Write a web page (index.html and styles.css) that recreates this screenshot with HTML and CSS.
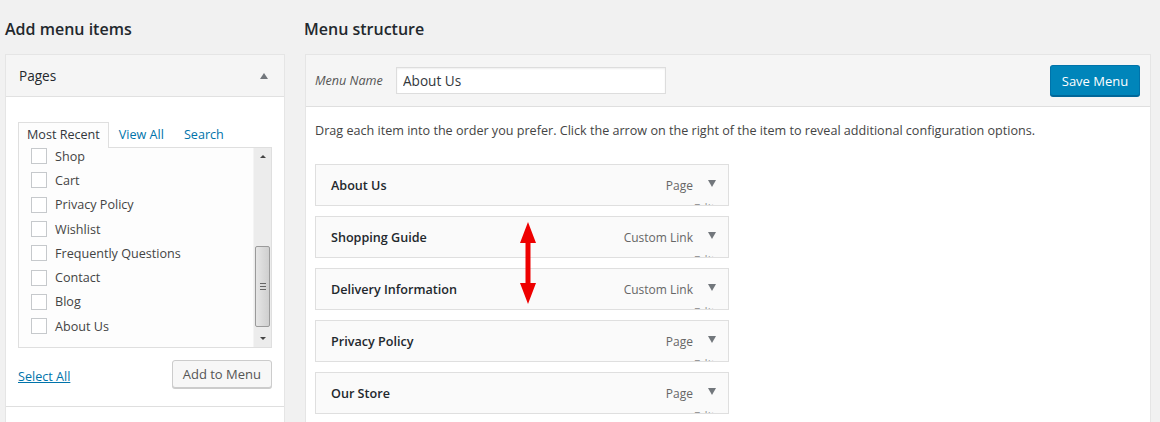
FILE: index.html
```html
<!DOCTYPE html>
<html lang="en">
<head>
    <meta charset="UTF-8">
    <title>Menus</title>
    <link rel="stylesheet" href="styles.css">
</head>
<body>
    <div class="nav-menus">
        <!-- Left column: add items -->
        <div class="menu-settings-col">
            <h2>Add menu items</h2>
            <div class="accordion">
                <div class="accordion-title">
                    <span>Pages</span>
                    <span class="toggle-up"></span>
                </div>
                <div class="accordion-body">
                    <ul class="tabs">
                        <li class="tab active">Most Recent</li>
                        <li class="tab"><a href="#">View All</a></li>
                        <li class="tab"><a href="#">Search</a></li>
                    </ul>
                    <div class="checklist">
                        <ul class="checklist-items">
                            <li><span class="check"></span>Shop</li>
                            <li><span class="check"></span>Cart</li>
                            <li><span class="check"></span>Privacy Policy</li>
                            <li><span class="check"></span>Wishlist</li>
                            <li><span class="check"></span>Frequently Questions</li>
                            <li><span class="check"></span>Contact</li>
                            <li><span class="check"></span>Blog</li>
                            <li><span class="check"></span>About Us</li>
                        </ul>
                        <div class="scrollbar">
                            <span class="sb-up"></span>
                            <div class="sb-track">
                                <div class="sb-thumb"><span class="grip"></span></div>
                            </div>
                            <span class="sb-down"></span>
                        </div>
                    </div>
                    <div class="add-row">
                        <a href="#" class="select-all">Select All</a>
                        <button class="btn-secondary">Add to Menu</button>
                    </div>
                </div>
                <div class="accordion-next"></div>
            </div>
        </div>

        <!-- Right column: menu structure -->
        <div class="menu-edit-col">
            <h2>Menu structure</h2>
            <div class="menu-edit">
                <div class="menu-header">
                    <label class="menu-name-label">Menu Name</label>
                    <input class="menu-name" type="text" value="About Us">
                    <button class="btn-primary">Save Menu</button>
                </div>
                <div class="menu-body">
                    <p class="drag-help">Drag each item into the order you prefer. Click the arrow on the right of the item to reveal additional configuration options.</p>
                    <ul class="menu-items">
                        <li class="menu-item"><span class="item-title">About Us</span><span class="item-type">Page</span><span class="item-arrow"></span><span class="item-edit">Edit</span></li>
                        <li class="menu-item"><span class="item-title">Shopping Guide</span><span class="item-type">Custom Link</span><span class="item-arrow"></span><span class="item-edit">Edit</span></li>
                        <li class="menu-item"><span class="item-title">Delivery Information</span><span class="item-type">Custom Link</span><span class="item-arrow"></span><span class="item-edit">Edit</span></li>
                        <li class="menu-item"><span class="item-title">Privacy Policy</span><span class="item-type">Page</span><span class="item-arrow"></span><span class="item-edit">Edit</span></li>
                        <li class="menu-item"><span class="item-title">Our Store</span><span class="item-type">Page</span><span class="item-arrow"></span><span class="item-edit">Edit</span></li>
                    </ul>
                    <svg class="drag-arrow" width="16" height="82" viewBox="0 0 16 82">
                        <polygon points="8,0 16,21 10.5,21 10.5,61 16,61 8,82 0,61 5.5,61 5.5,21 0,21" fill="#ee0000"/>
                    </svg>
                </div>
            </div>
        </div>
    </div>
</body>
</html>
```

FILE: styles.css
```css
body {
    margin: 0;
    background-color: #f1f1f1;
    color: #444;
    font-family: "Open Sans", "Noto Sans", sans-serif;
    font-size: 12.6px;
}

ul {
    list-style: none;
    margin: 0;
    padding: 0;
}

.nav-menus {
    display: flex;
    padding: 0 9px 0 5px;
    gap: 20px;
}

h2 {
    margin: 17px 0 13px;
    font-size: 16px;
    font-weight: 600;
    color: #23282d;
    line-height: 24px;
}

/* left column */
.menu-settings-col {
    width: 280px;
    flex-shrink: 0;
}

.accordion {
    margin-top: 1px;
    border: 1px solid #e5e5e5;
    background-color: #fff;
}

.accordion-title {
    display: flex;
    justify-content: space-between;
    align-items: center;
    height: 41px;
    padding: 0 16px 0 13px;
    background-color: #f5f5f5;
    border-bottom: 1px solid #e1e1e1;
    font-size: 13.6px;
    color: #23282d;
}

.toggle-up {
    width: 0;
    height: 0;
    border-left: 4px solid transparent;
    border-right: 4px solid transparent;
    border-bottom: 6px solid #72777c;
}

.accordion-body {
    padding: 25px 12px 18px;
    border-bottom: 1px solid #dfdfdf;
}

.tabs {
    display: flex;
    height: 25px;
}

.tab {
    padding: 4px 10px 0;
    color: #0073aa;
}

.tab a {
    color: #0073aa;
    text-decoration: none;
}

.tab.active {
    color: #32373c;
    border: 1px solid #dfdfdf;
    border-bottom: none;
    background-color: #fdfdfd;
    padding: 3px 8px 0;
    margin-bottom: -1px;
    position: relative;
}

.checklist {
    display: flex;
    height: 199px;
    border: 1px solid #dfdfdf;
    background-color: #fdfdfd;
    overflow: hidden;
}

.checklist-items {
    flex: 1;
    margin-top: -4px;
    padding-left: 12px;
}

.checklist-items li {
    display: flex;
    align-items: center;
    height: 24.3px;
    color: #444;
}

.check {
    width: 14px;
    height: 14px;
    border: 1px solid #c6c9cc;
    background-color: #fff;
    margin-right: 8px;
}

.scrollbar {
    width: 17px;
    display: flex;
    flex-direction: column;
    align-items: center;
    background-color: #ececec;
    border-left: 1px solid #f4f4f4;
}

.sb-up,
.sb-down {
    width: 0;
    height: 0;
    border-left: 3px solid transparent;
    border-right: 3px solid transparent;
    margin: 7px 0;
}

.sb-up {
    border-bottom: 3px solid #444;
}

.sb-down {
    border-top: 3px solid #444;
}

.sb-track {
    flex: 1;
    width: 100%;
    display: flex;
    flex-direction: column;
    justify-content: flex-end;
    padding-bottom: 3px;
}

.sb-thumb {
    height: 79px;
    margin: 0 1px;
    border: 1px solid #9a9a9a;
    border-radius: 2px;
    background: linear-gradient(to right, #e6e6e6, #d8d8d8 60%, #cfcfcf);
    display: flex;
    align-items: center;
    justify-content: center;
}

.grip {
    width: 6px;
    height: 5px;
    border-top: 1px solid #666;
    border-bottom: 1px solid #666;
    background: linear-gradient(#666, #666) center / 6px 1px no-repeat;
}

.add-row {
    display: flex;
    justify-content: space-between;
    align-items: center;
    margin-top: 12px;
}

.select-all {
    color: #0073aa;
    text-decoration: underline;
    padding-top: 4px;
}

.btn-secondary {
    height: 28px;
    padding: 0 10px;
    font-family: inherit;
    font-size: 13px;
    color: #555;
    background-color: #f7f7f7;
    border: 1px solid #ccc;
    border-radius: 3px;
    box-shadow: 0 1px 0 #ccc;
}

.accordion-next {
    height: 40px;
    background-color: #fff;
}

/* right column */
.menu-edit-col {
    flex: 1;
}

.menu-edit-col h2 {
    margin-left: -1px;
}

.menu-edit {
    border: 1px solid #e5e5e5;
    background-color: #fff;
}

.menu-header {
    display: flex;
    align-items: center;
    height: 51px;
    padding: 0 10px 0 9px;
    background-color: #f5f5f5;
    border-bottom: 1px solid #dfdfdf;
}

.menu-name-label {
    font-style: italic;
    color: #555;
    width: 81px;
}

.menu-name {
    width: 270px;
    height: 27px;
    box-sizing: border-box;
    border: 1px solid #ddd;
    padding: 0 6px;
    font-family: inherit;
    font-size: 13.6px;
    color: #32373c;
    box-shadow: inset 0 1px 2px rgba(0,0,0,0.07);
}

.btn-primary {
    margin-left: auto;
    width: 90px;
    height: 31px;
    font-family: inherit;
    font-size: 13px;
    color: #fff;
    background-color: #0085ba;
    border: 1px solid #0073aa;
    border-bottom-color: #006799;
    border-radius: 3px;
    box-shadow: 0 1px 0 #006799;
}

.menu-body {
    position: relative;
    padding: 14px 9px 20px;
}

.drag-help {
    margin: 0 0 23px;
    line-height: 20px;
    color: #444;
}

.menu-item {
    position: relative;
    display: flex;
    align-items: center;
    height: 40px;
    margin-bottom: 10px;
    padding: 0 12px 0 15px;
    border: 1px solid #dfdfdf;
    background-color: #fafafa;
    overflow: hidden;
    width: 385px;
}

.item-title {
    flex: 1;
    font-size: 12.6px;
    font-weight: 600;
    color: #23282d;
}

.item-type {
    font-size: 12px;
    color: #666;
    margin-right: 15px;
}

.item-arrow {
    width: 0;
    height: 0;
    border-left: 4.5px solid transparent;
    border-right: 4.5px solid transparent;
    border-top: 7px solid #72777c;
    margin-bottom: 3px;
}

.item-edit {
    position: absolute;
    right: 13px;
    top: 36px;
    font-size: 12px;
    line-height: 16px;
    color: #999;
}

.drag-arrow {
    position: absolute;
    left: 214px;
    top: 115px;
}
```
